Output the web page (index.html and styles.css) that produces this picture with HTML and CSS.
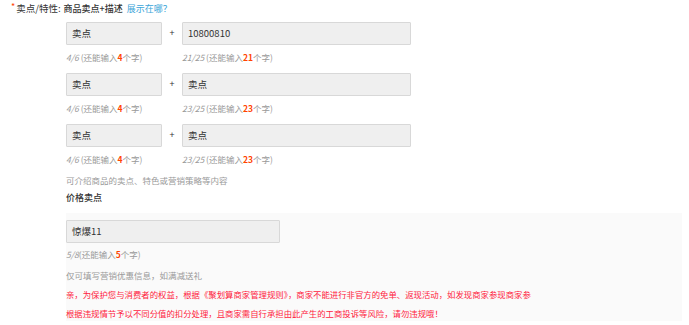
FILE: index.html
```html
<!DOCTYPE html>
<html lang="zh-CN">
<head>
<meta charset="utf-8">
<title>卖点/特性</title>
<link rel="stylesheet" href="styles.css">
</head>
<body>
<div class="form">
  <div class="head">
    <span class="req">*</span><span class="lbl">卖点/特性:</span><span class="title">商品卖点+描述</span><a class="link">展示在哪？</a>
  </div>
  <div class="pairs">
    <div class="pair">
      <div class="col short">
        <div class="inp">卖点</div>
        <div class="hint"><em>4/6</em> (还能输入<b>4</b>个字)</div>
      </div>
      <div class="plus">+</div>
      <div class="col long">
        <div class="inp">10800810</div>
        <div class="hint"><em>21/25</em> (还能输入<b>21</b>个字)</div>
      </div>
    </div>
    <div class="pair">
      <div class="col short">
        <div class="inp">卖点</div>
        <div class="hint"><em>4/6</em> (还能输入<b>4</b>个字)</div>
      </div>
      <div class="plus">+</div>
      <div class="col long">
        <div class="inp">卖点</div>
        <div class="hint"><em>23/25</em> (还能输入<b>23</b>个字)</div>
      </div>
    </div>
    <div class="pair">
      <div class="col short">
        <div class="inp">卖点</div>
        <div class="hint"><em>4/6</em> (还能输入<b>4</b>个字)</div>
      </div>
      <div class="plus">+</div>
      <div class="col long">
        <div class="inp">卖点</div>
        <div class="hint"><em>23/25</em> (还能输入<b>23</b>个字)</div>
      </div>
    </div>
  </div>
  <div class="desc">可介绍商品的卖点、特色或营销策略等内容</div>
  <div class="sub">价格卖点</div>
  <div class="panel">
    <div class="inp price">惊爆11</div>
    <div class="hint"><em>5/8</em>(还能输入<b>5</b>个字)</div>
    <div class="note">仅可填写营销优惠信息，如满减送礼</div>
    <div class="warn">亲，为保护您与消费者的权益，根据《聚划算商家管理规则》，商家不能进行非官方的免单、返现活动，如发现商家参现商家参</div>
    <div class="warn">根据违规情节予以不同分值的扣分处理，且商家需自行承担由此产生的工商投诉等风险，请勿违规哦！</div>
  </div>
</div>
</body>
</html>
```

FILE: styles.css
```css
html, body {
  margin: 0;
  padding: 0;
  background: #fff;
}
body {
  font-family: "Noto Sans CJK SC", "Noto Sans", sans-serif;
  color: #333;
}
.form {
  display: flex;
  flex-direction: column;
}
.head {
  display: flex;
  align-items: center;
  height: 15px;
  padding-top: 1px;
  padding-left: 11px;
  font-size: 9.5px;
  line-height: 15px;
}
.req {
  color: #f40;
  font-size: 9px;
  margin-right: 1px;
  align-self: flex-start;
  line-height: 12px;
}
.lbl {
  color: #333;
  margin-right: 3px;
}
.title {
  color: #333;
  font-weight: 500;
  font-size: 9px;
  margin-right: 4px;
}
.link {
  color: #3ca5d9;
  font-size: 9px;
}
.pairs {
  display: flex;
  flex-direction: column;
  padding-left: 66px;
  padding-top: 6px;
  gap: 8px;
}
.pair {
  display: flex;
  align-items: flex-start;
}
.col {
  display: flex;
  flex-direction: column;
}
.short { width: 96px; }
.long { width: 229px; }
.plus {
  width: 20px;
  text-align: center;
  font-size: 9px;
  line-height: 21px;
  color: #333;
}
.inp {
  box-sizing: border-box;
  height: 23px;
  border: 1px solid #d8d8d8;
  background: #efefef;
  border-radius: 1px;
  padding-left: 5px;
  font-size: 9.5px;
  line-height: 21px;
  color: #333;
}
.hint {
  margin-top: 4px;
  font-size: 8.5px;
  line-height: 16px;
  color: #999;
  white-space: nowrap;
}
.hint em {
  font-style: italic;
}
.hint b {
  color: #f40;
  font-weight: 700;
}
.desc {
  margin-top: 5px;
  padding-left: 66px;
  font-size: 8.5px;
  line-height: 16px;
  color: #999;
}
.sub {
  margin-top: 2px;
  padding-left: 66px;
  font-size: 9px;
  line-height: 16px;
  color: #333;
  font-weight: 500;
}
.panel {
  margin: 7px 7px 0 66px;
  padding-top: 7px;
  background: #fafafa;
  display: flex;
  flex-direction: column;
  height: 101px;
}
.price {
  width: 214px;
}
.panel .hint {
  margin-top: 3px;
}
.note {
  margin-top: 5px;
  font-size: 8.5px;
  line-height: 16px;
  color: #999;
}
.warn {
  font-size: 8.4px;
  line-height: 19px;
  color: #ff1a40;
  white-space: nowrap;
}
.note + .warn {
  margin-top: 2px;
}
```
